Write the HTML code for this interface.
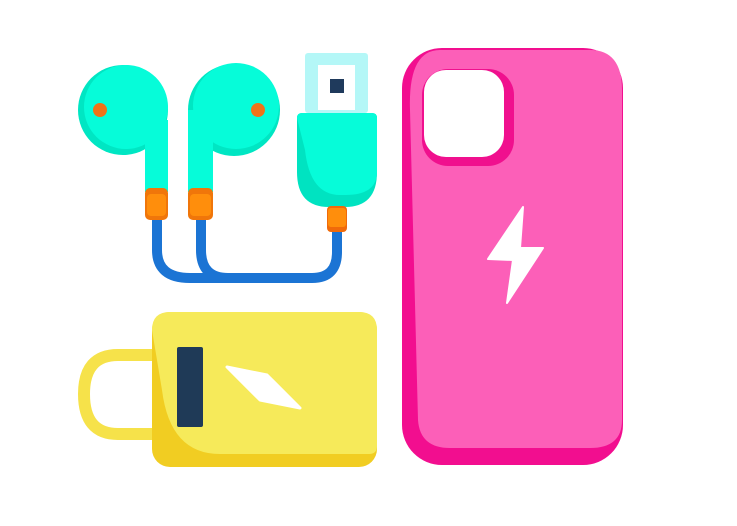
<!DOCTYPE html>
<html><head><style>html,body{margin:0;padding:0;background:#fff;width:737px;height:526px;overflow:hidden}</style></head>
<body>
<svg width="737" height="526" viewBox="0 0 737 526" xmlns="http://www.w3.org/2000/svg">
<!-- cables -->
<path d="M157 218 V250 Q157 278 190 278 H312 Q337 278 337 252 V230" fill="none" stroke="#1b74d4" stroke-width="10"/>
<path d="M201 218 V250 Q201 278 228 278" fill="none" stroke="#1b74d4" stroke-width="10"/>
<!-- left bud -->
<circle cx="123" cy="110" r="45" fill="#00e6c3"/>
<circle cx="126" cy="107" r="42" fill="#06fcd9"/>
<rect x="145" y="120" width="23" height="72" fill="#06fcd9"/>
<rect x="145" y="188" width="23" height="32" rx="5" fill="#f0760a"/>
<rect x="147" y="194" width="19" height="22" rx="4" fill="#ff8e0c"/>
<circle cx="100" cy="110" r="7" fill="#f07218"/>
<!-- right bud -->
<circle cx="234" cy="110" r="46" fill="#00e6c3"/>
<circle cx="236" cy="106" r="43" fill="#06fcd9"/>
<rect x="188" y="110" width="25" height="82" fill="#06fcd9"/>
<rect x="188" y="188" width="25" height="32" rx="5" fill="#f0760a"/>
<rect x="190" y="194" width="21" height="22" rx="4" fill="#ff8e0c"/>
<circle cx="258" cy="110" r="7" fill="#f07218"/>
<!-- usb -->
<rect x="305" y="53" width="63" height="60" rx="3" fill="#b4f7f7"/>
<rect x="318" y="65" width="37" height="45" fill="#fff"/>
<rect x="330" y="79" width="14" height="14" fill="#1f3a5c"/>
<path d="M297 118 Q297 113 302 113 H372 Q377 113 377 118 V172 Q377 207 345 207 H329 Q297 207 297 172 Z" fill="#00e3c1"/>
<path d="M297 118 Q297 113 302 113 H372 Q377 113 377 118 V172 Q377 195 345 195 H340 Q310 195 305 150 Z" fill="#06fcd9"/>
<rect x="327" y="206" width="20" height="26" rx="4" fill="#f06a0a"/>
<rect x="328" y="208" width="18" height="19" rx="3" fill="#ff8e0c"/>
<!-- battery -->
<path d="M152 355 H118 Q84 355 84 394 Q84 434 118 434 H152" fill="none" stroke="#f6e24a" stroke-width="12"/>
<rect x="152" y="312" width="225" height="155" rx="18" fill="#f1cd22"/>
<path d="M170 312 H359 Q377 312 377 330 V446 Q377 454 369 454 H220 Q170 454 162 390 L152 330 Q152 312 170 312 Z" fill="#f6ea5a"/>
<rect x="177" y="347" width="26" height="80" rx="2" fill="#1f3a57"/>
<path d="M227 367 L267 375 L300 408 L260 400 Z" fill="#fff" stroke="#fff" stroke-width="3" stroke-linejoin="round"/>
<!-- phone -->
<rect x="402" y="48" width="221" height="417" rx="40" fill="#f20e8f"/>
<path d="M440 50 H590 Q622 50 622 90 V420 Q622 448 590 448 H450 Q420 448 418 420 L410 110 Q408 50 440 50 Z" fill="#fc5fb8"/>
<rect x="422" y="69" width="92" height="97" rx="26" fill="#f0108e"/>
<rect x="424" y="70" width="80" height="87" rx="22" fill="#fff"/>
<path d="M523 207 L488 259 L513 260 L507 303 L543 248 L520 248 Z" fill="#fff" stroke="#fff" stroke-width="2" stroke-linejoin="round"/>
</svg>
</body></html>
